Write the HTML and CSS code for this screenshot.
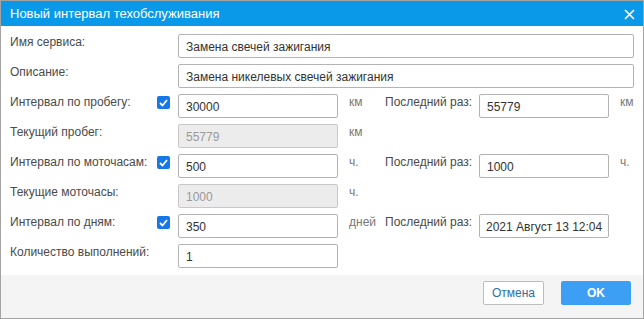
FILE: index.html
```html
<!DOCTYPE html>
<html lang="ru">
<head>
  <meta charset="UTF-8">
  <title>Новый интервал техобслуживания</title>
  <link rel="stylesheet" href="styles.css">
</head>
<body>
  <div class="dialog">
    <div class="dialog-header">
      <span class="dialog-title">Новый интервал техобслуживания</span>
      <svg class="close-icon" width="11" height="11" viewBox="0 0 11 11">
        <path d="M1 1 L10 10 M10 1 L1 10" stroke="#fff" stroke-width="1.6" fill="none"/>
      </svg>
    </div>

    <div class="dialog-body">
      <label class="field-label">Имя сервиса:</label>
      <input class="field wide" type="text" value="Замена свечей зажигания">

      <label class="field-label">Описание:</label>
      <input class="field wide" type="text" value="Замена никелевых свечей зажигания">

      <label class="field-label">Интервал по пробегу:</label>
      <span class="check"><span class="check-box"><svg width="9" height="8" viewBox="0 0 9 8"><path d="M1 4 L3.5 6.5 L8 1" stroke="#fff" stroke-width="1.8" fill="none"/></svg></span></span>
      <input class="field" type="text" value="30000">
      <span class="unit">км</span>
      <label class="field-label last-label">Последний раз:</label>
      <input class="field" type="text" value="55779">
      <span class="unit">км</span>

      <label class="field-label">Текущий пробег:</label>
      <span></span>
      <input class="field" type="text" value="55779" disabled>
      <span class="unit row-end">км</span>

      <label class="field-label">Интервал по моточасам:</label>
      <span class="check"><span class="check-box"><svg width="9" height="8" viewBox="0 0 9 8"><path d="M1 4 L3.5 6.5 L8 1" stroke="#fff" stroke-width="1.8" fill="none"/></svg></span></span>
      <input class="field" type="text" value="500">
      <span class="unit">ч.</span>
      <label class="field-label last-label">Последний раз:</label>
      <input class="field" type="text" value="1000">
      <span class="unit">ч.</span>

      <label class="field-label">Текущие моточасы:</label>
      <span></span>
      <input class="field" type="text" value="1000" disabled>
      <span class="unit row-end">ч.</span>

      <label class="field-label">Интервал по дням:</label>
      <span class="check"><span class="check-box"><svg width="9" height="8" viewBox="0 0 9 8"><path d="M1 4 L3.5 6.5 L8 1" stroke="#fff" stroke-width="1.8" fill="none"/></svg></span></span>
      <input class="field" type="text" value="350">
      <span class="unit">дней</span>
      <label class="field-label last-label">Последний раз:</label>
      <input class="field date" type="text" value="2021 Август 13 12:04">
      <span></span>

      <label class="field-label">Количество выполнений:</label>
      <span></span>
      <input class="field row-end" type="text" value="1">
    </div>

    <div class="dialog-footer">
      <button class="btn btn-cancel">Отмена</button>
      <button class="btn btn-ok">OK</button>
    </div>
  </div>
</body>
</html>
```

FILE: styles.css
```css
* {
  box-sizing: border-box;
}
body {
  margin: 0;
  font-family: "Liberation Sans", Arial, sans-serif;
  font-size: 12px;
  background: #fff;
}
.dialog {
  width: 644px;
  height: 319px;
  border: 1px solid #a3a3a3;
  display: flex;
  flex-direction: column;
  background: #fff;
}
.dialog-header {
  height: 25px;
  background: #0a99e9;
  display: flex;
  align-items: center;
  justify-content: space-between;
  padding: 0 8px 0 9px;
  flex-shrink: 0;
}
.dialog-title {
  color: #fff;
  font-size: 13px;
}
.close-icon {
  display: block;
  margin-top: 1px;
}
.dialog-body {
  display: grid;
  grid-template-columns: 147px 21px 160px 47px 94px 130px 25px;
  grid-auto-rows: 24px;
  row-gap: 6px;
  padding: 8px 8px 7px 9px;
  height: 249px;
}
.field-label {
  grid-column: 1;
  color: #4a4a4a;
  padding-top: 1px;
  white-space: nowrap;
}
.last-label {
  grid-column: 5;
}
.check {
  padding-top: 2px;
}
.check-box {
  display: flex;
  align-items: center;
  justify-content: center;
  width: 13px;
  height: 13px;
  background: #1677e8;
  border-radius: 2px;
}
.check-box svg {
  display: block;
}
.field {
  height: 24px;
  width: 100%;
  border: 1px solid #b3b3b3;
  border-radius: 2px;
  padding: 0 7px;
  font-family: inherit;
  font-size: 12px;
  color: #333;
  background: #fff;
  margin: 0;
  padding-top: 2px;
}
.field:disabled {
  background: #ececec;
  border-color: #c8c8c8;
  color: #9a9a9a;
}
.field.wide {
  grid-column: 3 / 8;
}
.field.date {
  padding: 2px 5px 0 6px;
}
.unit {
  color: #777;
  padding-left: 11px;
  padding-top: 1px;
}
.row-end {
  grid-column-end: span 1;
}
.dialog-footer {
  flex: 1;
  background: #f4f4f4;
  display: flex;
  justify-content: flex-end;
  align-items: flex-start;
  gap: 17px;
  padding: 6px 12px 0 0;
}
.btn {
  height: 24px;
  font-family: inherit;
  font-size: 12px;
  border-radius: 2px;
  cursor: pointer;
}
.btn-cancel {
  width: 61px;
  background: #fff;
  border: 1px solid #bdbdbd;
  color: #2d6ea8;
}
.btn-ok {
  width: 70px;
  background: #3d9ff3;
  border: 1px solid #3d9ff3;
  color: #fff;
  font-weight: bold;
}
```
